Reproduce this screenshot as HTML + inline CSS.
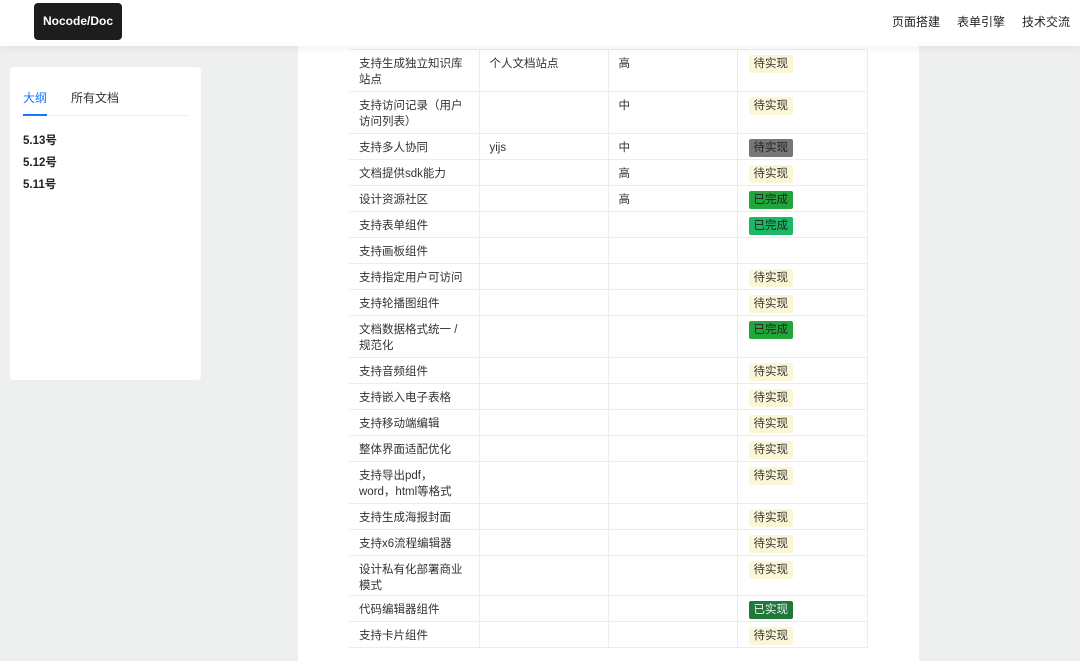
<!DOCTYPE html>
<html><head><meta charset="utf-8"><style>
*{margin:0;padding:0;box-sizing:border-box}
body{width:1080px;height:661px;overflow:hidden;background:#eeefef;font-family:"Liberation Sans","Noto Sans CJK SC",sans-serif;color:#333;position:relative}
.hdr{position:absolute;left:0;top:0;width:1080px;height:46px;background:#fff;box-shadow:0 2px 8px rgba(0,0,0,.06);z-index:5}
.logo{position:absolute;left:34px;top:3px;width:88px;height:37px;background:#1d1d1d;border-radius:4px;color:#fff;font-weight:bold;font-size:12px;line-height:37px;text-align:center}
.nav{position:absolute;top:13px;font-size:12px;color:#222}
.card{position:absolute;left:10px;top:67px;width:191px;height:313px;background:#fff;border-radius:4px}
.tabs{position:absolute;left:13px;top:22px;width:165px;height:27px;border-bottom:1px solid #eee;font-size:12px}
.tab1{position:absolute;left:0;top:0;color:#1677ff;height:27px;border-bottom:2px solid #1677ff}
.tab2{position:absolute;left:48px;top:0;color:#333}
.it{position:absolute;left:13px;font-size:11.5px;font-weight:bold;color:#222}
.main{position:absolute;left:298px;top:0;width:621px;height:661px;background:#fff}
table{position:absolute;left:51px;top:49px;border-collapse:collapse;table-layout:fixed;font-size:11.5px;width:518px}
td{border:1px solid #ececec;vertical-align:top;padding:7px 10px 0 10px;line-height:15.5px;height:26px}
td.d{height:42px}
tr td:first-child{border-left:none}
.b{display:inline-block;padding:0 5px;height:18px;line-height:18px;border-radius:2px;background:#fbf6d6;color:#333;margin-left:1px;margin-top:-2px}
.g{background:#777;color:#222}
.gr{background:#22a53b;color:#222}
.gr2{background:#1cb866;color:#222}
.dg{background:#1f7a3a;color:#eee}
</style></head><body>
<div class="hdr"><div class="logo">Nocode/Doc</div>
<span class="nav" style="left:892px">页面搭建</span><span class="nav" style="left:957px">表单引擎</span><span class="nav" style="left:1022px">技术交流</span></div>
<div class="card"><div class="tabs"><span class="tab1">大纲</span><span class="tab2">所有文档</span></div>
<div class="it" style="top:65px">5.13号</div><div class="it" style="top:87px">5.12号</div><div class="it" style="top:109px">5.11号</div></div>
<div class="main"><table>
<colgroup><col style="width:130px"><col style="width:129px"><col style="width:129px"><col style="width:130px"></colgroup>
<tr><td class="d">支持生成独立知识库站点</td><td>个人文档站点</td><td>高</td><td><span class="b">待实现</span></td></tr>
<tr><td class="d">支持访问记录（用户访问列表）</td><td></td><td>中</td><td><span class="b">待实现</span></td></tr>
<tr><td>支持多人协同</td><td>yijs</td><td>中</td><td><span class="b g">待实现</span></td></tr>
<tr><td>文档提供sdk能力</td><td></td><td>高</td><td><span class="b">待实现</span></td></tr>
<tr><td>设计资源社区</td><td></td><td>高</td><td><span class="b gr">已完成</span></td></tr>
<tr><td>支持表单组件</td><td></td><td></td><td><span class="b gr2">已完成</span></td></tr>
<tr><td>支持画板组件</td><td></td><td></td><td></td></tr>
<tr><td>支持指定用户可访问</td><td></td><td></td><td><span class="b">待实现</span></td></tr>
<tr><td>支持轮播图组件</td><td></td><td></td><td><span class="b">待实现</span></td></tr>
<tr><td class="d">文档数据格式统一 / 规范化</td><td></td><td></td><td><span class="b gr">已完成</span></td></tr>
<tr><td>支持音频组件</td><td></td><td></td><td><span class="b">待实现</span></td></tr>
<tr><td>支持嵌入电子表格</td><td></td><td></td><td><span class="b">待实现</span></td></tr>
<tr><td>支持移动端编辑</td><td></td><td></td><td><span class="b">待实现</span></td></tr>
<tr><td>整体界面适配优化</td><td></td><td></td><td><span class="b">待实现</span></td></tr>
<tr><td class="d">支持导出pdf，word，html等格式</td><td></td><td></td><td><span class="b">待实现</span></td></tr>
<tr><td>支持生成海报封面</td><td></td><td></td><td><span class="b">待实现</span></td></tr>
<tr><td>支持x6流程编辑器</td><td></td><td></td><td><span class="b">待实现</span></td></tr>
<tr><td class="d" style="height:40px">设计私有化部署商业模式</td><td></td><td></td><td><span class="b">待实现</span></td></tr>
<tr><td>代码编辑器组件</td><td></td><td></td><td><span class="b dg">已实现</span></td></tr>
<tr><td>支持卡片组件</td><td></td><td></td><td><span class="b">待实现</span></td></tr>
</table></div>
</body></html>
